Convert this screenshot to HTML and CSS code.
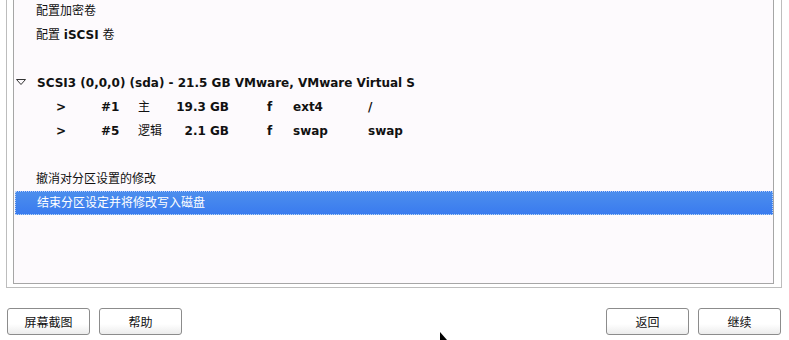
FILE: index.html
```html
<!DOCTYPE html>
<html lang="zh-CN">
<head>
    <meta charset="UTF-8">
    <title>分区磁盘</title>
    <link rel="stylesheet" href="styles.css">
</head>
<body>
    <div class="frame">
        <div class="list">
            <div class="row">配置加密卷</div>
            <div class="row">配置 <b>iSCSI</b> 卷</div>
            <div class="row"></div>
            <div class="row disk">
                <svg class="expander" width="10" height="6" viewBox="0 0 10 6">
                    <polygon points="0.5,0.5 9.5,0.5 5,5.5" fill="none" stroke="#333" stroke-width="1"/>
                </svg>
                <b class="clip">SCSI3 (0,0,0) (sda) - 21.5 GB VMware, VMware Virtual S</b>
            </div>
            <div class="row part">
                <b>&gt;</b><b>#1</b><span>主</span><b class="size">19.3 GB</b><b>f</b><b>ext4</b><b>/</b>
            </div>
            <div class="row part">
                <b>&gt;</b><b>#5</b><span>逻辑</span><b class="size">2.1 GB</b><b>f</b><b>swap</b><b>swap</b>
            </div>
            <div class="row"></div>
            <div class="row">撤消对分区设置的修改</div>
            <div class="row selected">结束分区设定并将修改写入磁盘</div>
        </div>
    </div>

    <div class="buttons">
        <button class="btn">屏幕截图</button>
        <button class="btn">帮助</button>
        <span class="spacer"></span>
        <button class="btn">返回</button>
        <button class="btn">继续</button>
    </div>

    <svg class="cursor" width="9" height="9" viewBox="0 0 9 9">
        <polygon points="0,0 0,8 7,8" fill="#000"/>
    </svg>
</body>
</html>
```

FILE: styles.css
```css
body {
    margin: 0;
    background: #ffffff;
    font-family: "DejaVu Sans", "Noto Sans CJK SC", sans-serif;
    font-size: 12px;
    color: #111;
    overflow: hidden;
}

b {
    font-weight: bold;
}

.frame {
    margin: -10px 0 0 6px;
    width: 776px;
    box-sizing: border-box;
    border: 1px solid #bdbdbd;
    padding: 0 7px 3px 6px;
}

.list {
    height: 293px;
    box-sizing: border-box;
    border: 1px solid #a6a6a6;
    background: #fdfafd;
    padding-top: 7px;
}

.row {
    height: 24px;
    line-height: 24px;
    padding-left: 22px;
    white-space: nowrap;
}

.disk {
    display: flex;
    align-items: center;
    padding-left: 2px;
}

.expander {
    margin: -3px 11px 0 0;
}

.clip {
    display: block;
    width: 384px;
    overflow: hidden;
}

/* partition rows: fixed columns */
.part {
    display: grid;
    grid-template-columns: 45px 37px 32px 59px 38px 26px 75px auto;
    align-items: baseline;
    padding-left: 42px;
}

.part .size {
    text-align: right;
}

.part > :nth-child(5) {
    grid-column: 6;
}

.part > :nth-child(6) {
    grid-column: 7;
}

.part > :nth-child(7) {
    grid-column: 8;
}

.selected {
    margin-left: 1px;
    width: 758px;
    box-sizing: border-box;
    border: 1px dotted #b9d2f7;
    line-height: 22px;
    padding-left: 21px;
    background: linear-gradient(#4c8eed, #3a7bef);
    color: #ffffff;
}

.buttons {
    display: flex;
    gap: 9px;
    margin: 20px 8px 0 7px;
}

.spacer {
    flex: 1;
}

.btn {
    width: 83px;
    height: 27px;
    border: 1px solid #8c8c8c;
    border-radius: 3px;
    background: linear-gradient(#ffffff 60%, #ececec);
    font-family: "Noto Sans CJK SC", sans-serif;
    font-size: 12px;
    color: #111;
    padding: 0;
}

.cursor {
    position: absolute;
    left: 440px;
    top: 332px;
}
```
